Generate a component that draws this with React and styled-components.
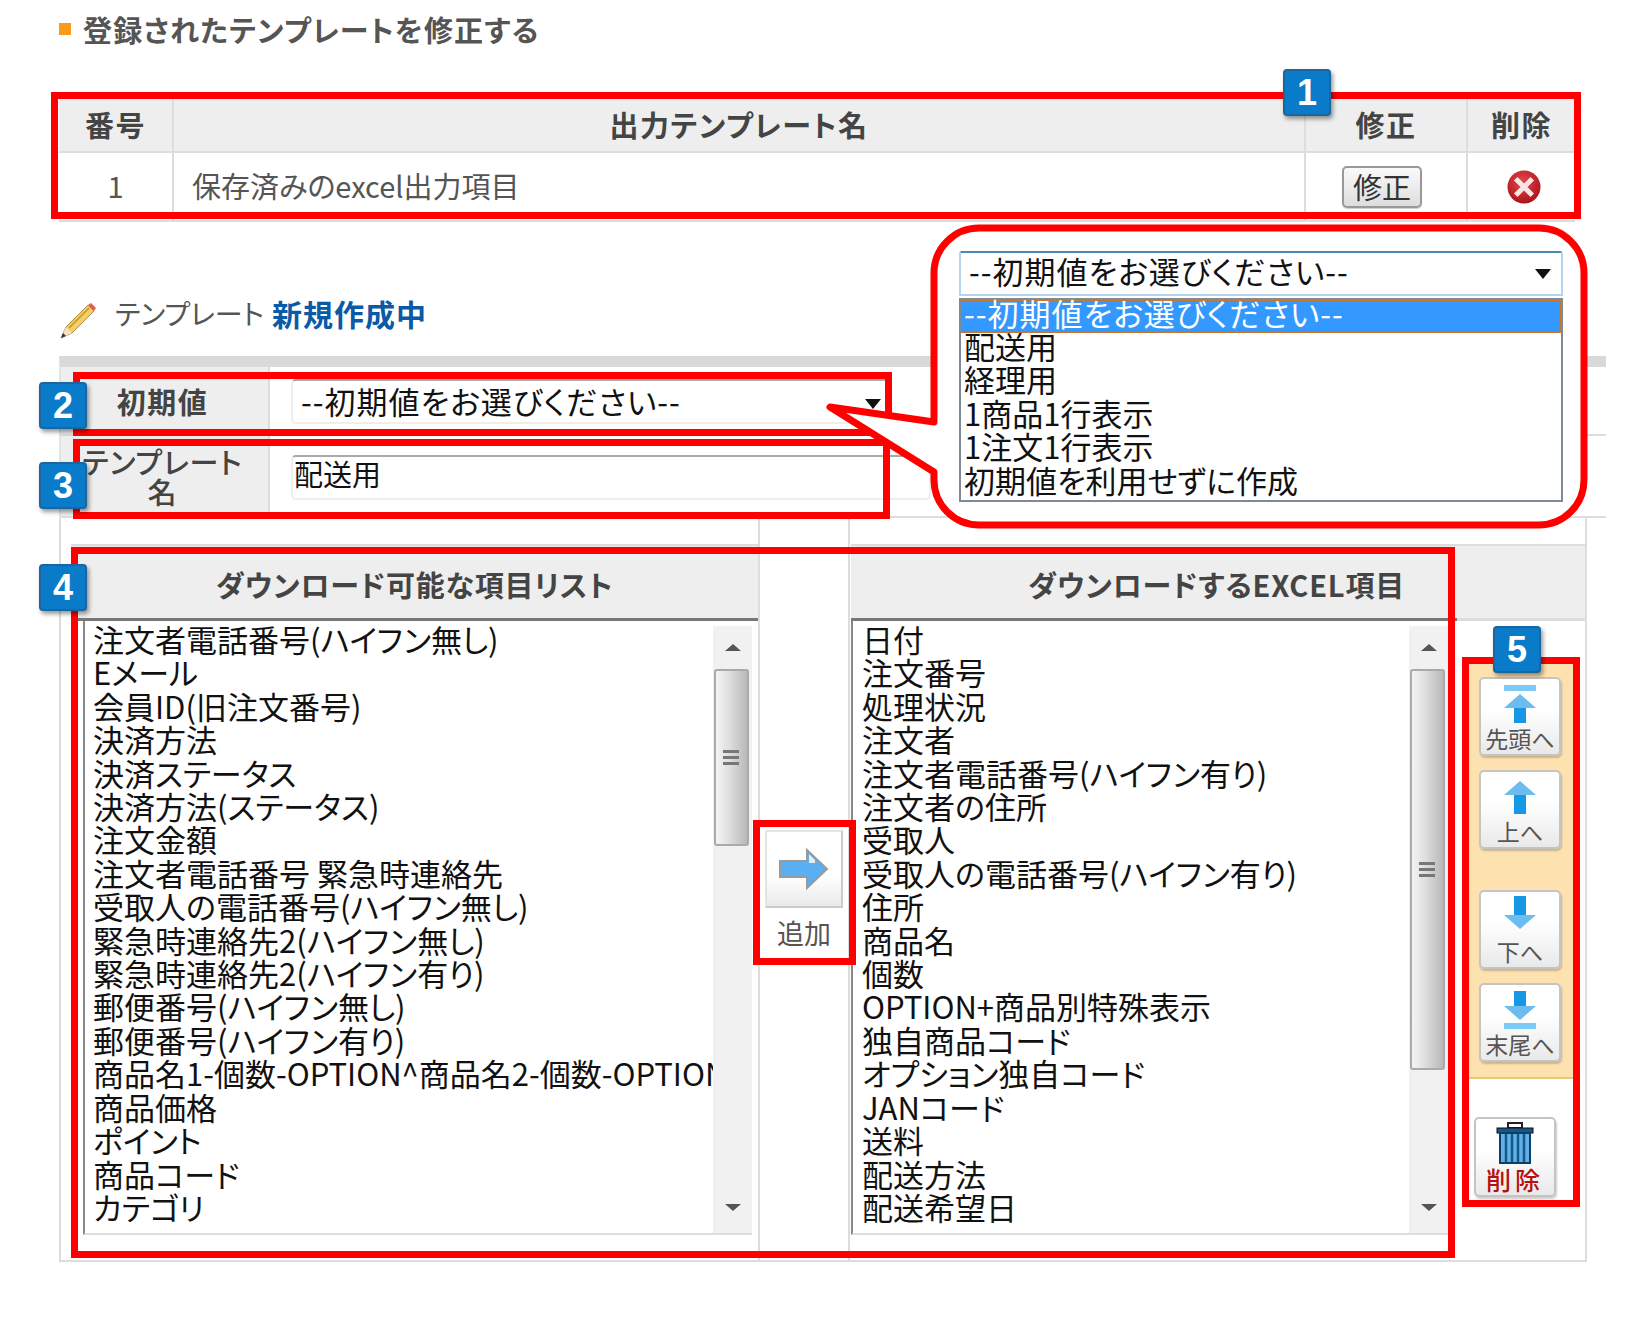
import React from 'react';
import styled, {createGlobalStyle} from 'styled-components';

const LEFT_ITEMS = [
  '注文者電話番号(ハイフン無し)',
  'Eメール',
  '会員ID(旧注文番号)',
  '決済方法',
  '決済ステータス',
  '決済方法(ステータス)',
  '注文金額',
  '注文者電話番号 緊急時連絡先',
  '受取人の電話番号(ハイフン無し)',
  '緊急時連絡先2(ハイフン無し)',
  '緊急時連絡先2(ハイフン有り)',
  '郵便番号(ハイフン無し)',
  '郵便番号(ハイフン有り)',
  '商品名1-個数-OPTION^商品名2-個数-OPTION',
  '商品価格',
  'ポイント',
  '商品コード',
  'カテゴリ'
];

const RIGHT_ITEMS = [
  '日付',
  '注文番号',
  '処理状況',
  '注文者',
  '注文者電話番号(ハイフン有り)',
  '注文者の住所',
  '受取人',
  '受取人の電話番号(ハイフン有り)',
  '住所',
  '商品名',
  '個数',
  'OPTION+商品別特殊表示',
  '独自商品コード',
  'オプション独自コード',
  'JANコード',
  '送料',
  '配送方法',
  '配送希望日'
];

const DROPDOWN_ITEMS = ['配送用', '経理用', '1商品1行表示', '1注文1行表示', '初期値を利用せずに作成'];

const GlobalStyle = createGlobalStyle`
  * {
    box-sizing: border-box;
  }

  body {
    background: #fff;
    font-family: "Noto Sans CJK JP", "Liberation Sans", sans-serif;
    font-feature-settings: "palt";
    margin: 0;
  }
`;

const Page = styled.div`
  height: 1321px;
  overflow: hidden;
  padding: 14px 0 0 59px;
  position: relative;
  width: 1629px;
`;

const Heading = styled.h1`
  align-items: center;
  color: #555;
  display: flex;
  font-size: 29px;
  font-weight: 700;
  gap: 12px;
  height: 30px;
  letter-spacing: 1.2px;
  margin: 0 0 48px;
`;

const Square = styled.span`
  background: #f89a1c;
  height: 12px;
  width: 12px;
`;

const SavedTable = styled.div`
  border-top: 2px solid #e0e0e0;
  display: grid;
  grid-template-columns: 115px 1132px 162px 107px;
  grid-template-rows: 59px 69px;
  width: 1516px;
`;

const HeadCell = styled.div`
  align-items: center;
  background: #eee;
  border-bottom: 2px solid #ddd;
  border-right: 2px solid #ddd;
  color: #444;
  display: flex;
  font-size: 29px;
  font-weight: 700;
  justify-content: center;
  letter-spacing: 1.5px;
  padding-top: 3px;

  &:nth-child(4) {
    border-right: 0;
  }
`;

const BodyCell = styled.div`
  align-items: center;
  border-bottom: 2px solid #ddd;
  border-right: 2px solid #ddd;
  color: #555;
  display: flex;
  font-size: 29px;
  justify-content: ${({$left}) => ($left ? 'flex-start' : 'center')};
  padding-bottom: 4px;
  padding-left: ${({$left}) => ($left ? '18px' : '0')};

  &:last-child {
    border-right: 0;
  }
`;

const EditButton = styled.div`
  align-items: center;
  background: linear-gradient(#fafafa, #ddd);
  border: 2px solid #999;
  border-radius: 5px;
  box-shadow: 0 1px 1px rgba(0, 0, 0, 0.2);
  color: #333;
  display: flex;
  font-size: 29px;
  height: 42px;
  justify-content: center;
  margin: 5px 8px 0 0;
  padding-bottom: 3px;
  width: 80px;
`;

const DeleteMark = styled.svg`
  margin: 5px 0 0 5px;
`;

const ModeRow = styled.div`
  align-items: center;
  color: #555;
  display: flex;
  font-size: 28px;
  height: 38px;
  margin: 77px 0 19px;
`;

const PencilIcon = styled.svg`
  margin-top: 6px;
`;

const ModeLabel = styled.span`
  margin: 0 0 10px 18px;
`;

const ModeState = styled.strong`
  color: #0a5aa8;
  font-size: 30px;
  letter-spacing: 1px;
  margin: 0 0 10px 8px;
`;

const FormTable = styled.div`
  border-left: 2px solid #e4e4e4;
  border-top: 11px solid #d9d9d9;
  width: 1547px;
`;

const FormRow = styled.div`
  border-bottom: 2px solid #ddd;
  display: flex;
  height: ${({$height}) => $height}px;
`;

const FormLabel = styled.div`
  align-items: center;
  background: #eee;
  border-right: 2px solid #ddd;
  color: #444;
  display: flex;
  font-size: 29px;
  font-weight: ${({$bold}) => ($bold ? 700 : 500)};
  justify-content: center;
  letter-spacing: ${({$bold}) => ($bold ? '1.5px' : '1px')};
  line-height: 30px;
  padding-right: 4px;
  text-align: center;
  width: 209px;
`;

const FormField = styled.div`
  align-items: center;
  border: 2px solid #eee;
  border-radius: 5px;
  border-top-color: #aaa;
  color: #111;
  display: flex;
  font-size: ${({$select}) => ($select ? '31px' : '29px')};
  height: 45px;
  justify-content: space-between;
  letter-spacing: ${({$select}) => ($select ? '1px' : '0')};
  margin: ${({$top}) => $top}px 0 0 21px;
  padding: ${({$select}) => ($select ? '0 8px 2px 8px' : '0 1px 10px')};
  width: ${({$width}) => $width}px;
`;

const ListTable = styled.div`
  border: 2px solid #ddd;
  border-top: 0;
  display: flex;
  height: 744px;
  width: 1528px;
`;

const ListColumn = styled.div`
  flex: none;
  padding-top: 26px;
  width: ${({$width}) => $width}px;
`;

const MiddleColumn = styled.div`
  align-items: center;
  border-left: 2px solid #ddd;
  border-right: 2px solid #ddd;
  display: flex;
  flex: none;
  flex-direction: column;
  padding-top: 312px;
  width: 92px;
`;

const ListHeader = styled.div`
  align-items: center;
  background: #eee;
  border-bottom: 3px solid #777;
  border-top: 2px solid #ddd;
  color: #444;
  display: flex;
  font-size: 29px;
  font-weight: 700;
  height: 77px;
  justify-content: center;
  letter-spacing: 0.8px;
  margin-left: ${({$offset}) => $offset}px;
  padding-left: ${({$shift}) => $shift || 0}px;
  padding-top: 3px;
`;

const ListBox = styled.div`
  border-bottom: 2px solid #ddd;
  border-left: 2px solid #888;
  display: flex;
  height: 614px;
  margin-left: ${({$offset}) => $offset}px;
  width: ${({$width}) => $width}px;
`;

const ListItems = styled.div`
  color: #111;
  flex: 1;
  font-size: 31px;
  line-height: 33.4px;
  min-width: 0;
  overflow: hidden;
  padding: 1px 0 0 ${({$inset}) => $inset}px;
  white-space: nowrap;
`;

const ScrollTrack = styled.div`
  align-items: center;
  background: #f1f1f1;
  display: flex;
  flex: none;
  flex-direction: column;
  margin-top: 5px;
  width: 39px;
`;

const ScrollArrow = styled.div`
  align-items: center;
  display: flex;
  flex: none;
  height: 43px;
  justify-content: center;
  padding-bottom: ${({$last}) => ($last ? '8px' : '0')};
  width: 100%;
`;

const ScrollThumb = styled.div`
  align-items: center;
  background: linear-gradient(90deg, #f4f4f4, #ddd 45%, #b8b8b8);
  border: 2px solid #aaa;
  border-radius: 3px;
  display: flex;
  flex: none;
  height: ${({$height}) => $height}px;
  justify-content: center;
  margin-right: 3px;
  width: 35px;
`;

const ScrollGrip = styled.div`
  border-bottom: 3px solid #777;
  border-top: 3px solid #777;
  height: 15px;
  position: relative;
  width: 16px;

  &::after {
    background: #777;
    content: '';
    height: 3px;
    left: 0;
    position: absolute;
    right: 0;
    top: 3px;
  }
`;

const ScrollSpacer = styled.div`
  flex: 1;
`;

const AddButton = styled.div`
  align-items: center;
  background: linear-gradient(#fff 60%, #e9e9e9);
  border: 2px solid #e4e4e4;
  border-bottom-color: #ccc;
  border-right-color: #ccc;
  display: flex;
  height: 78px;
  justify-content: center;
  width: 78px;
`;

const AddLabel = styled.div`
  color: #555;
  font-size: 27px;
  margin-top: 5px;
`;

const SidePanel = styled.div`
  flex: 1;
  padding-top: 26px;
`;

const SideHeader = styled.div`
  background: #eee;
  border-bottom: 3px solid #ddd;
  border-top: 2px solid #ddd;
  height: 77px;
`;

const MoveGroup = styled.div`
  background: #fde1ae;
  border-bottom: 2px solid #e8c878;
  display: flex;
  flex-direction: column;
  height: 417px;
  margin: 41px 0 0 12px;
  padding: 15px 0 0 10px;
  width: 104px;
`;

const MoveButton = styled.div`
  align-items: center;
  background: linear-gradient(#fff 40%, #e9e9e9);
  border: 2px solid #c4c4c4;
  border-radius: 5px;
  box-shadow: 1px 2px 2px rgba(0, 0, 0, 0.2);
  color: #555;
  display: flex;
  flex: none;
  flex-direction: column;
  font-size: 23px;
  height: 79px;
  justify-content: flex-end;
  line-height: 30px;
  margin-top: ${({$gap}) => $gap}px;
  padding-bottom: 1px;
  width: 82px;
`;

const DeleteButton = styled(MoveButton)`
  color: #b80f0f;
  font-size: 25px;
  font-weight: 500;
  height: 80px;
  letter-spacing: 4px;
  margin: 38px 0 0 17px;
`;

const Frame = styled.div`
  border: 7px solid #f00;
  height: ${({$h}) => $h}px;
  left: ${({$x}) => $x}px;
  position: absolute;
  top: ${({$y}) => $y}px;
  width: ${({$w}) => $w}px;
`;

const Badge = styled.div`
  align-items: center;
  background: #0a7bc8;
  border: 2px solid #1b669f;
  border-radius: 4px;
  box-shadow: 2px 3px 4px rgba(0, 0, 0, 0.4);
  color: #fff;
  display: flex;
  font-family: "Liberation Sans", sans-serif;
  font-size: 36px;
  font-weight: 700;
  height: 47px;
  justify-content: center;
  left: ${({$x}) => $x}px;
  position: absolute;
  top: ${({$y}) => $y}px;
  width: 48px;
`;

const Callout = styled.div`
  height: 320px;
  left: 820px;
  position: absolute;
  top: 220px;
  width: 780px;
`;

const CalloutShape = styled.svg`
  left: 0;
  position: absolute;
  top: 0;
`;

const DropdownPanel = styled.div`
  left: 139px;
  position: absolute;
  top: 31px;
  width: 604px;
`;

const DropdownSelect = styled.div`
  align-items: center;
  background: #fff;
  border: 2px solid #b5d3ea;
  border-radius: 3px 3px 0 0;
  border-top-color: #4f86b5;
  color: #111;
  display: flex;
  font-size: 31px;
  height: 45px;
  justify-content: space-between;
  letter-spacing: 1px;
  padding: 0 10px 7px 8px;
`;

const DropdownList = styled.div`
  background: #fff;
  border: 2px solid #7f8a99;
  color: #111;
  font-size: 31px;
  height: 204px;
  line-height: 33.4px;
  margin-top: 2px;
`;

const DropdownOption = styled.div`
  background: ${({$selected}) => ($selected ? '#3399ff' : 'transparent')};
  border: 1px ${({$selected}) => ($selected ? 'dotted #c8742a' : 'solid transparent')};
  color: ${({$selected}) => ($selected ? '#fff' : '#111')};
  height: ${({$selected}) => ($selected ? '33px' : '33.4px')};
  letter-spacing: ${({$selected}) => ($selected ? '1px' : '0')};
  line-height: 24px;
  padding-left: 2px;
  white-space: nowrap;
`;

const Caret = styled.span`
  border-left: 8px solid transparent;
  border-right: 8px solid transparent;
  border-top: 10px solid #111;
  height: 0;
  margin-top: 7px;
  width: 0;
`;

const ScrollCaret = styled.span`
  border-${({$up}) => ($up ? 'bottom' : 'top')}: 7px solid #555;
  border-left: 8px solid transparent;
  border-right: 8px solid transparent;
  height: 0;
  width: 0;
`;

const Pencil = () => (
  <PencilIcon width="38" height="38" viewBox="0 0 38 38">
    <path d="M2 36 L7 25 L29 3 L35 9 L13 31 Z" fill="#f2cf6a" stroke="#a8924a" strokeWidth="1" />
    <path d="M2 36 L7 25 L13 31 Z" fill="#f3e3c0" />
    <path d="M2 36 L4 31 L7 34 Z" fill="#333" />
    <path d="M29 3 L32 1 L37 6 L35 9 Z" fill="#e3604f" />
    <path d="M10 26 L30 6" stroke="#d99f2b" strokeWidth="2" />
  </PencilIcon>
);

const DeleteIcon = () => (
  <DeleteMark width="34" height="34" viewBox="0 0 34 34">
    <defs>
      <radialGradient id="deleteRed" cx="45%" cy="35%" r="70%">
        <stop offset="0%" stopColor="#e4484c" />
        <stop offset="100%" stopColor="#a80f16" />
      </radialGradient>
    </defs>
    <circle cx="17" cy="17" r="16.5" fill="url(#deleteRed)" />
    <path d="M10.5 10.5 L23.5 23.5 M23.5 10.5 L10.5 23.5" stroke="#f6e6e6" strokeWidth="5" strokeLinecap="square" />
  </DeleteMark>
);

const MoveArrow = ({down, bar}) => (
  <svg width="32" height="38" viewBox="0 0 32 38" style={{marginBottom: bar ? 0 : 2}}>
    <g transform={down ? 'rotate(180 16 19)' : undefined}>
      {bar && <rect x="0" y="0" width="32" height="6" fill="#7ccaf6" />}
      <path d={bar ? 'M16 9 L32 23 H0 Z' : 'M16 5 L32 19 H0 Z'} fill="#6cbcf0" />
      <rect x="10" y={bar ? 23 : 19} width="12" height={bar ? 15 : 19} fill="#1798e4" />
    </g>
  </svg>
);

const AddArrow = () => (
  <svg width="50" height="42" viewBox="0 0 50 42">
    <path d="M1 13 H28 V2 L48 21 L28 40 V29 H1 Z" fill="#5aaef2" stroke="#9a9a9a" strokeWidth="2" />
    <path d="M3 15 H30 V6 L36 12 V15 H3 Z" fill="#dfeefb" />
  </svg>
);

const TrashIcon = () => (
  <svg width="38" height="42" viewBox="0 0 38 42">
    <rect x="12" y="1" width="14" height="5" fill="none" stroke="#222" strokeWidth="2" />
    <rect x="1" y="6" width="36" height="5" fill="#16578a" stroke="#111" strokeWidth="1" />
    <rect x="4" y="11" width="30" height="30" fill="#62b1e6" stroke="#0c3f66" strokeWidth="2" />
    <path d="M10 12 V40 M16 12 V40 M22 12 V40 M28 12 V40" stroke="#14598c" strokeWidth="2.5" />
  </svg>
);

const Scrollbar = ({thumbHeight}) => (
  <ScrollTrack>
    <ScrollArrow>
      <ScrollCaret $up />
    </ScrollArrow>
    <ScrollThumb $height={thumbHeight}>
      <ScrollGrip />
    </ScrollThumb>
    <ScrollSpacer />
    <ScrollArrow $last>
      <ScrollCaret />
    </ScrollArrow>
  </ScrollTrack>
);

const ItemList = ({inset, items}) => (
  <ListItems $inset={inset}>
    {items.map((item) => (
      <div key={item}>{item}</div>
    ))}
  </ListItems>
);

const App = () => (
  <Page>
    <GlobalStyle />

    <Heading>
      <Square />
      登録されたテンプレートを修正する
    </Heading>

    <SavedTable>
      <HeadCell>番号</HeadCell>
      <HeadCell>出力テンプレート名</HeadCell>
      <HeadCell>修正</HeadCell>
      <HeadCell>削除</HeadCell>
      <BodyCell>1</BodyCell>
      <BodyCell $left>保存済みのexcel出力項目</BodyCell>
      <BodyCell>
        <EditButton>修正</EditButton>
      </BodyCell>
      <BodyCell>
        <DeleteIcon />
      </BodyCell>
    </SavedTable>

    <ModeRow>
      <Pencil />
      <ModeLabel>テンプレート</ModeLabel>
      <ModeState>新規作成中</ModeState>
    </ModeRow>

    <FormTable>
      <FormRow $height={69}>
        <FormLabel $bold>初期値</FormLabel>
        <FormField $select $top={12} $width={600}>
          --初期値をお選びください--
          <Caret />
        </FormField>
      </FormRow>
      <FormRow $height={82}>
        <FormLabel>
          テンプレート
          <br />名
        </FormLabel>
        <FormField $top={19} $width={640}>
          配送用
        </FormField>
      </FormRow>
    </FormTable>

    <ListTable>
      <ListColumn $width={697}>
        <ListHeader $offset={10}>ダウンロード可能な項目リスト</ListHeader>
        <ListBox $offset={22} $width={669}>
          <ItemList inset={8} items={LEFT_ITEMS} />
          <Scrollbar thumbHeight={177} />
        </ListBox>
      </ListColumn>

      <MiddleColumn>
        <AddButton>
          <AddArrow />
        </AddButton>
        <AddLabel>追加</AddLabel>
      </MiddleColumn>

      <ListColumn $width={607}>
        <ListHeader $offset={1} $shift={125}>
          ダウンロードするEXCEL項目
        </ListHeader>
        <ListBox $offset={1} $width={597}>
          <ItemList inset={9} items={RIGHT_ITEMS} />
          <Scrollbar thumbHeight={401} />
        </ListBox>
      </ListColumn>

      <SidePanel>
        <SideHeader />
        <MoveGroup>
          <MoveButton $gap={0}>
            <MoveArrow bar />
            先頭へ
          </MoveButton>
          <MoveButton $gap={14}>
            <MoveArrow />
            上へ
          </MoveButton>
          <MoveButton $gap={41}>
            <MoveArrow down />
            下へ
          </MoveButton>
          <MoveButton $gap={14}>
            <MoveArrow down bar />
            末尾へ
          </MoveButton>
        </MoveGroup>
        <DeleteButton $gap={0}>
          <TrashIcon />
          削除
        </DeleteButton>
      </SidePanel>
    </ListTable>

    <Frame $x={51} $y={92} $w={1530} $h={127} />
    <Frame $x={73} $y={372} $w={819} $h={64} />
    <Frame $x={73} $y={439} $w={817} $h={80} />
    <Frame $x={71} $y={547} $w={1384} $h={711} />
    <Frame $x={753} $y={820} $w={103} $h={145} />
    <Frame $x={1462} $y={657} $w={118} $h={550} />

    <Badge $x={1283} $y={69}>1</Badge>
    <Badge $x={39} $y={382}>2</Badge>
    <Badge $x={39} $y={462}>3</Badge>
    <Badge $x={39} $y={564}>4</Badge>
    <Badge $x={1493} $y={626}>5</Badge>

    <Callout>
      <CalloutShape width="780" height="320" viewBox="0 0 780 320">
        <path
          d="M114 53 A45 45 0 0 1 159 8 H719 A45 45 0 0 1 764 53 V260 A45 45 0 0 1 719 305 H159 A45 45 0 0 1 114 260 V252 L10 187 L114 202 Z"
          fill="#fff"
          stroke="#f00"
          strokeWidth="7"
          strokeLinejoin="round"
        />
      </CalloutShape>
      <DropdownPanel>
        <DropdownSelect>
          --初期値をお選びください--
          <Caret />
        </DropdownSelect>
        <DropdownList>
          <DropdownOption $selected>--初期値をお選びください--</DropdownOption>
          {DROPDOWN_ITEMS.map((item) => (
            <DropdownOption key={item}>{item}</DropdownOption>
          ))}
        </DropdownList>
      </DropdownPanel>
    </Callout>
  </Page>
);

export default App;
